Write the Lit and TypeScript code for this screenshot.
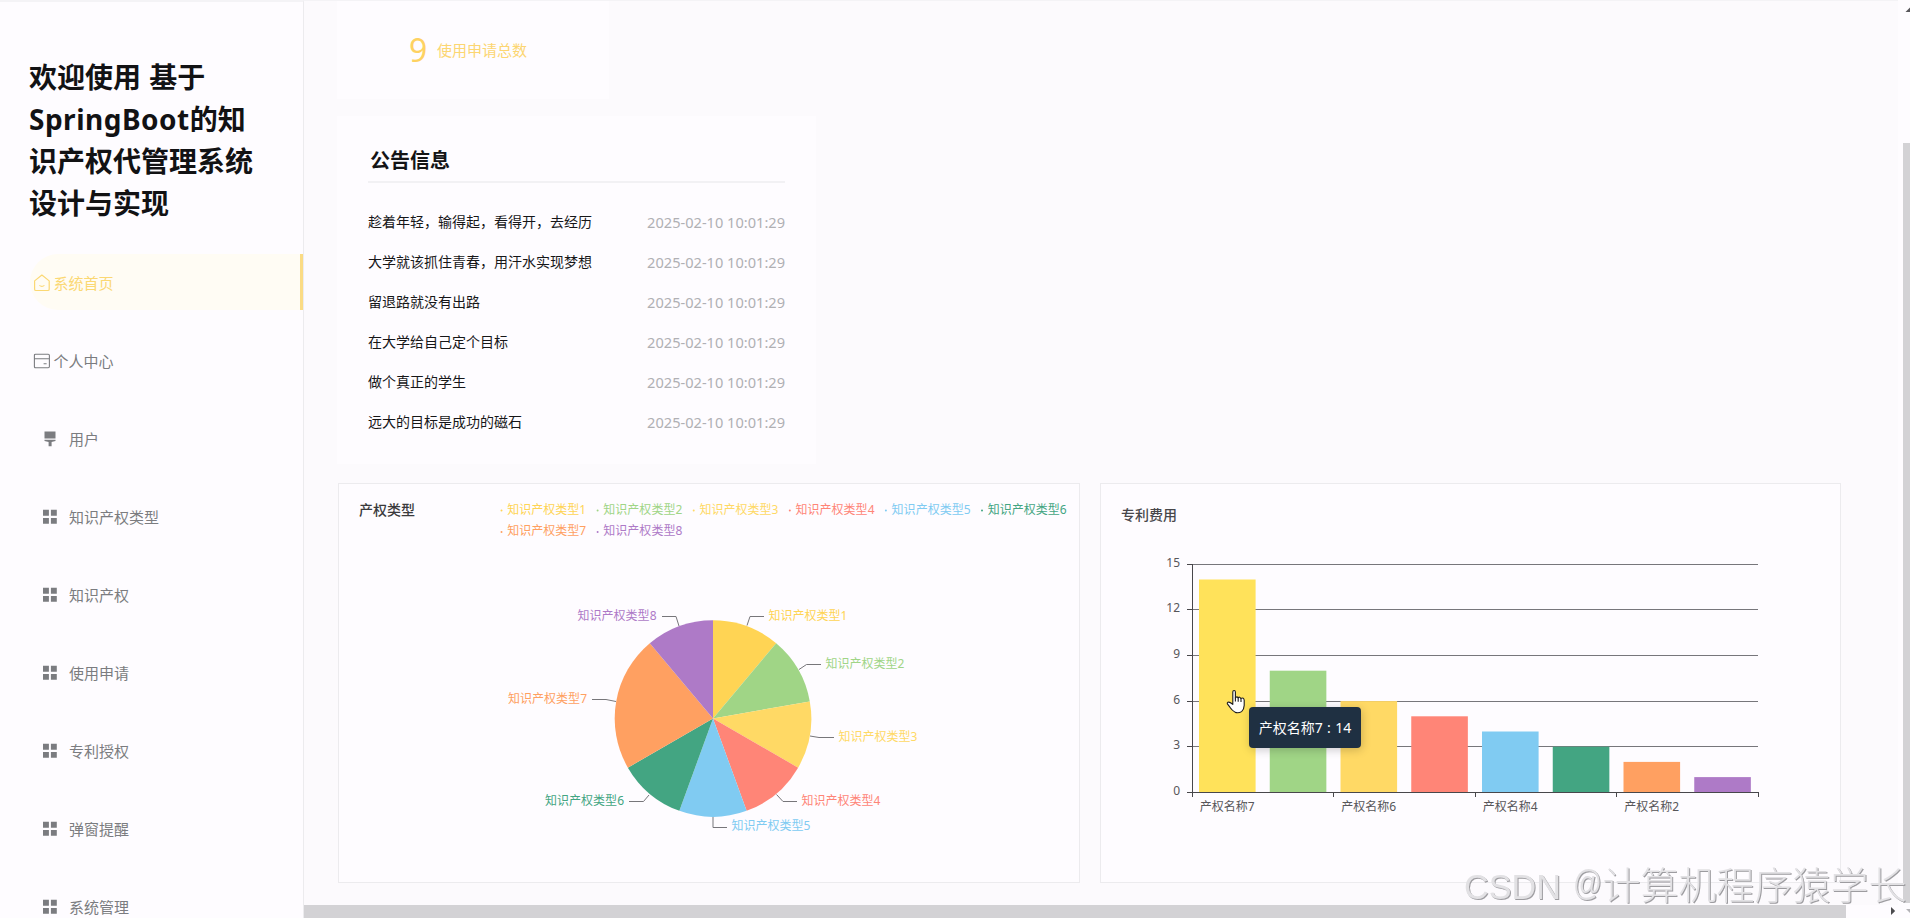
import { LitElement, html, svg, css, nothing } from "lit";
import { customElement } from "lit/decorators.js";

const FONT = css`"Noto Sans", "Noto Sans CJK SC", sans-serif`;

type Icon = "home" | "card" | "brush" | "grid";

const ICONS: Record<Icon, unknown> = {
  home: svg`<path d="M1.6 6.9 L8.9 1 L16.2 6.9 V15.2 Q16.2 16.5 14.9 16.5 H2.9 Q1.6 16.5 1.6 15.2 Z M6.4 11.4 Q8.9 13.4 11.4 11.4" fill="none" stroke="currentColor" stroke-width="1.2" stroke-linejoin="round"/>`,
  card: svg`<path d="M2.6 2.2 H15.2 Q16.4 2.2 16.4 3.4 V14.6 Q16.4 15.8 15.2 15.8 H2.6 Q1.4 15.8 1.4 14.6 V3.4 Q1.4 2.2 2.6 2.2 Z M1.4 6.7 H16.4 M10.6 11.7 H13.6" fill="none" stroke="currentColor" stroke-width="1.1"/>`,
  brush: svg`<path d="M3.5 1.6 H14.5 V8.6 H3.5 Z M3.5 9.8 H14.5 V10.9 L10.6 12.1 V16.2 H7.6 V12.1 L3.5 10.9 Z" fill="currentColor"/>`,
  grid: svg`<path d="M2 1.8 H7.9 V7.8 H2 Z M9.9 1.8 H15.8 V7.8 H9.9 Z M2 9.9 H7.9 V15.8 H2 Z M9.9 9.9 H15.8 V15.8 H9.9 Z" fill="currentColor"/>`,
};

const MENU: { icon: Icon; label: string; top?: boolean; active?: boolean }[] = [
  { icon: "home", label: "系统首页", top: true, active: true },
  { icon: "card", label: "个人中心", top: true },
  { icon: "brush", label: "用户" },
  { icon: "grid", label: "知识产权类型" },
  { icon: "grid", label: "知识产权" },
  { icon: "grid", label: "使用申请" },
  { icon: "grid", label: "专利授权" },
  { icon: "grid", label: "弹窗提醒" },
  { icon: "grid", label: "系统管理" },
];

@customElement("side-menu")
class SideMenu extends LitElement {
  static styles = css`
    :host { display: block; box-sizing: border-box; width: 304px; height: 918px; overflow: hidden; background: #fefcff; border-top: 2px solid #f4f3f6; border-right: 1px solid #ecebee; font-family: ${FONT}; }
    .title { margin: 54px 46px 30px 29px; font-size: 28px; line-height: 42px; font-weight: 700; color: #121214; height: 168px; white-space: nowrap; word-spacing: 1px; }
    .latin { letter-spacing: 0.5px; }
    .list { display: flex; flex-direction: column; gap: 22px; }
    .item { display: flex; align-items: center; box-sizing: border-box; height: 56px; margin-left: 30px; padding-left: 10.5px; gap: 10.5px; color: #7b7c80; font-size: 15px; font-weight: 400; white-space: nowrap; }
    .top { padding-left: 2.5px; gap: 3px; }
    .active { color: #fbd873; background: #fffcf4; border-radius: 28px 0 0 28px; border-right: 3px solid #fadb84; }
    svg { width: 18px; height: 18px; flex: none; margin-top: 2px; }
  `;
  render() {
    return html`
      <div class="title">欢迎使用 基于<br /><span class="latin">SpringBoot</span>的知<br />识产权代管理系统<br />设计与实现</div>
      <nav class="list">
        ${MENU.map((m) => html`<div class="item ${m.top ? "top" : ""} ${m.active ? "active" : ""}">
          <svg viewBox="0 0 18 18">${ICONS[m.icon]}</svg><span>${m.label}</span>
        </div>`)}
      </nav>`;
  }
}

const NOTICES = [
  "趁着年轻，输得起，看得开，去经历",
  "大学就该抓住青春，用汗水实现梦想",
  "留退路就没有出路",
  "在大学给自己定个目标",
  "做个真正的学生",
  "远大的目标是成功的磁石",
];

@customElement("notice-card")
class NoticeCard extends LitElement {
  static styles = css`
    :host { display: block; box-sizing: border-box; width: 479px; height: 348px; padding: 29px 31px 0 31px; background: #fefcff; font-family: ${FONT}; }
    .head { height: 36px; line-height: 32px; padding-left: 2px; font-size: 20px; font-weight: 700; color: #141416; border-bottom: 2px solid #f2f1f4; }
    .rows { padding-top: 19px; }
    .row { display: flex; justify-content: space-between; height: 40px; line-height: 40px; font-size: 14px; color: #161618; }
    .date { color: #b0b0b4; font-size: 14.6px; font-weight: 400; }
  `;
  render() {
    return html`<div class="head">公告信息</div>
      <div class="rows">${NOTICES.map((n) => html`<div class="row"><span>${n}</span><span class="date">2025-02-10 10:01:29</span></div>`)}</div>`;
  }
}

const COLORS = ["#ffd454", "#a0d586", "#ffd965", "#ff8577", "#80cbf2", "#43a582", "#ffa061", "#ae7ac7"];
const WEIGHTS = [1, 1, 1, 1, 1, 1, 2, 1];

/* Leader line points and label anchor for every slice. */
const LABELS: { line: string; x: number; y: number; end?: boolean }[] = [
  { line: "747,625.5 750,616.5 764,616.5", x: 768.5, y: 620 },
  { line: "799,669.5 806.5,664.5 821,664.5", x: 825.5, y: 668 },
  { line: "810,736 819,737.5 834,737.5", x: 838.5, y: 741 },
  { line: "776.5,794.5 783,801.5 797,801.5", x: 801.5, y: 805 },
  { line: "713,817 713,827.5 727,827.5", x: 731.5, y: 830 },
  { line: "649,795 643.5,801.5 629,801.5", x: 624, y: 805, end: true },
  { line: "616,701.5 606,699.5 592,699.5", x: 587, y: 703, end: true },
  { line: "679,626 676,616.5 662,616.5", x: 656.5, y: 620, end: true },
];

@customElement("pie-panel")
class PiePanel extends LitElement {
  static styles = css`
    :host { display: block; box-sizing: border-box; width: 742px; height: 400px; border: 1px solid #ecebee; background: #fefcff; }
    svg { display: block; }
    text { font-family: ${FONT}; font-size: 12px; font-weight: 400; }
    .title { font-size: 14px; font-weight: 500; fill: #3a3a3c; }
  `;
  render() {
    const total = WEIGHTS.reduce((a, b) => a + b, 0);
    const cx = 713, cy = 718.5, r = 98.3;
    let acc = 0;
    const slices = WEIGHTS.map((w, i) => {
      const a0 = (acc / total) * Math.PI * 2;
      acc += w;
      const a1 = (acc / total) * Math.PI * 2;
      return svg`<path fill=${COLORS[i]} d=${`M${cx} ${cy} L${cx + r * Math.sin(a0)} ${cy - r * Math.cos(a0)} A${r} ${r} 0 0 1 ${cx + r * Math.sin(a1)} ${cy - r * Math.cos(a1)} Z`} />`;
    });
    return html`<svg width="740" height="398" viewBox="339 484 740 398">
      <text class="title" x="359" y="515.3">产权类型</text>
      ${COLORS.map((c, i) => {
        const x = 507.2 + (i % 6) * 96.1;
        const y = i < 6 ? 513.5 : 535;
        return svg`<circle cx=${x - 5.7} cy=${y - 3} r="1" fill=${c} /><text x=${x} y=${y} fill=${c} textLength="79">知识产权类型${i + 1}</text>`;
      })}
      ${slices}
      ${LABELS.map((l, i) => svg`<polyline points=${l.line} fill="none" stroke="#77767a" stroke-width="1" />
        <text x=${l.x} y=${l.y} fill=${COLORS[i]} text-anchor=${l.end ? "end" : "start"}>知识产权类型${i + 1}</text>`)}
    </svg>`;
  }
}

const BARS = [14, 8, 6, 5, 4, 3, 2, 1];
const NAMES = ["产权名称7", "", "产权名称6", "", "产权名称4", "", "产权名称2", ""];
const GRID_Y: [number, number][] = [[0, 792.5], [3, 746.5], [6, 701.5], [9, 655.5], [12, 609.5], [15, 564.5]];

@customElement("bar-panel")
class BarPanel extends LitElement {
  static styles = css`
    :host { display: block; position: relative; box-sizing: border-box; width: 741px; height: 400px; border: 1px solid #ecebee; background: #fefcff; font-family: ${FONT}; }
    svg { display: block; }
    text { font-size: 12px; font-weight: 400; fill: #57565a; }
    .title { font-size: 14px; font-weight: 500; fill: #48474b; }
    .tip { position: absolute; left: 148px; top: 223px; width: 112px; height: 41px; line-height: 41px; text-align: center; border-radius: 4px; background: #1f3042; color: #fff; font-size: 14px; word-spacing: 0.8px; white-space: nowrap; box-shadow: 1px 2px 10px rgba(0, 0, 0, 0.2); }
    .pointer { position: absolute; left: 125px; top: 205px; }
  `;
  render() {
    const x0 = 1192.5, base = 792, unit = 15.2, band = 70.75;
    return html`<svg width="739" height="398" viewBox="1101 484 739 398">
        <text class="title" x="1121" y="520.3">专利费用</text>
        ${GRID_Y.map(([v, y]) => svg`${v ? svg`<path d=${`M${x0} ${y} H1758`} stroke="#77767b" />` : nothing}
            <path d=${`M1187 ${y} H${x0}`} stroke="#48474b" />
            <text x="1180" y=${y + 2.5} text-anchor="end">${v}</text>`)}
        ${BARS.map((v, i) => svg`<rect x=${x0 + i * band + 6.5} y=${base - v * unit + 0.3} width="56.6" height=${v * unit} fill=${i ? COLORS[i] : "#ffe25a"} />`)}
        <path d="M1192.5 564 V797 M1187 792.5 H1759 M1333.5 792 V797 M1475.5 792 V797 M1616.5 792 V797 M1758.5 792 V797" stroke="#48474b" fill="none" />
        ${NAMES.map((n, i) => (n ? svg`<text x=${x0 + (i + 0.5) * band - 0.8} y="811" text-anchor="middle">${n}</text>` : nothing))}
      </svg>
      <div class="tip">产权名称7 : 14</div>
      <svg class="pointer" width="20" height="26" viewBox="0 0 20 26">
        <path d="M6.8 15.4 V3 Q6.8 1.5 8.1 1.5 Q9.4 1.5 9.4 3 V9 Q10.9 6.8 12 8.8 Q13.7 7.3 14.8 9.4 Q17.9 8.2 18.2 11.2 V16.4 Q18 20.6 15.6 22.6 Q12.6 24.4 9.3 23.4 Q6 21.4 3.9 18.2 L1.4 14.8 Q0.9 13 2.8 13.1 Q4.7 13.4 6.8 15.4 Z" fill="#fff" stroke="#1c1c1e" stroke-width="1.1" stroke-linejoin="round" />
        <path d="M9.4 8.6 V12.6 M12.2 8.8 V12.8 M15 9.6 V13" stroke="#1c1c1e" stroke-width="1.1" fill="none" />
      </svg>`;
  }
}

@customElement("app-root")
class AppRoot extends LitElement {
  static styles = css`
    :host { display: block; position: relative; width: 1910px; height: 918px; overflow: hidden; background: #fcfafd; font-family: ${FONT}; }
    .page { display: grid; grid-template-columns: 304px 1594px 12px; grid-template-rows: 905px 13px; height: 918px; }
    side-menu { grid-row: 1 / 3; }
    .main { box-sizing: border-box; padding-left: 33px; border-top: 1px solid #f4f3f6; overflow: hidden; }
    .stat { display: flex; align-items: center; box-sizing: border-box; width: 272px; height: 98px; padding: 0 0 1px 72px; margin-bottom: 17px; gap: 9px; background: #fefcff; color: #fcd672; font-size: 15px; font-weight: 400; }
    .num { width: 19px; font-size: 32px; line-height: 40px; font-weight: 400; color: #fed262; }
    .charts { display: flex; gap: 20px; padding: 19px 0 0 1px; }
    .vbar { background: #fefcff; display: flex; flex-direction: column; align-items: flex-end; }
    .vbar svg { display: block; flex: none; }
    .vthumb { width: 7px; height: 760px; background: #d3d2d5; }
    .hbar { grid-column: 2 / 4; display: flex; justify-content: space-between; background: #fefcff; }
    .hthumb { width: 1542px; height: 13px; background: #d3d2d5; }
    .mark { position: absolute; left: 1455px; top: 855px; pointer-events: none; }
    .mark text { font-weight: 300; fill: #e2e1e4; filter: drop-shadow(1.3px 1.3px 0.3px #9d9ca0); }
    .latin { font-family: "Liberation Sans", sans-serif; font-size: 35px; }
    .han { font-family: "Noto Sans CJK SC", sans-serif; font-size: 38px; }
  `;
  render() {
    return html`<div class="page">
        <side-menu></side-menu>
        <div class="main">
          <div class="stat"><span class="num">9</span><span>使用申请总数</span></div>
          <notice-card></notice-card>
          <div class="charts"><pie-panel></pie-panel><bar-panel></bar-panel></div>
        </div>
        <div class="vbar">
          <svg width="7" height="143" viewBox="0 0 7 143"><path d="M2.5 12 L7 7.5 V12 Z" fill="#58575b" /></svg>
          <div class="vthumb"></div>
        </div>
        <div class="hbar">
          <div class="hthumb"></div>
          <svg width="22" height="13" viewBox="0 0 22 13"><path d="M3 2 L7.2 6 L3 10 Z" fill="#4c4b4f" /><path d="M18 4 H22 V8 Z" fill="#b4b3b7" /></svg>
        </div>
      </div>
      <svg class="mark" width="455" height="63" viewBox="1455 855 455 63">
        <text class="latin" x="1464" y="899" textLength="97" lengthAdjust="spacingAndGlyphs">CSDN</text>
        <text class="latin" x="1573" y="895" textLength="29" lengthAdjust="spacingAndGlyphs">@</text>
        <text class="han" x="1602.5" y="899">计算机程序猿学长</text>
      </svg>`;
  }
}
